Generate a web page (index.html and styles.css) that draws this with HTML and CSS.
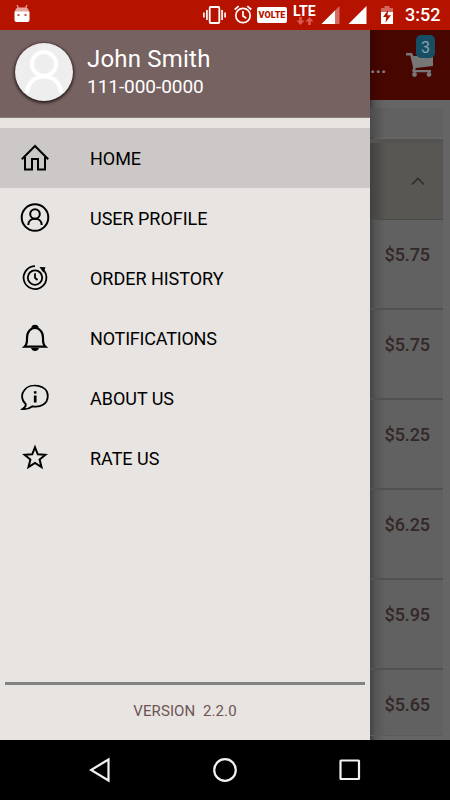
FILE: index.html
```
<!DOCTYPE html>
<html lang="en">
<head>
<meta charset="utf-8">
<title>Menu</title>
<link rel="stylesheet" href="styles.css">
</head>
<body>
<header class="status">
  <svg class="robot" width="16" height="18" viewBox="0 0 16 18"><path d="M3 0l1.400 3M13 0l-1.400 3" stroke="#e9a59d" stroke-width="1.200"/><path d="M1 7.500Q1 2.500 5 2.500h6q4 0 4 5z" fill="#e7a79f"/><path d="M.5 6.500h15V15q0 2-2 2h-11q-2 0-2-2z" fill="#fff"/><path d="M3.500 9h2v2h-2zM10.500 9h2v2h-2z" fill="#b85a50"/></svg>
  <svg class="vibrate" width="23" height="18" viewBox="0 0 23 18" fill="none" stroke="#fff"><rect x="6.700" y="1" width="9.600" height="16" rx="1" stroke-width="1.800"/><path d="M3.900 4v10M19.100 4v10" stroke-width="1.700"/><path d="M.9 6.500v5M22.100 6.500v5" stroke-width="1.600"/></svg>
  <svg class="alarm" width="18" height="19" viewBox="0 0 18 19" fill="none" stroke="#fff" stroke-width="1.700"><circle cx="9" cy="10.500" r="7.200"/><path d="M9 6v5l3.300 2.200M.7 4.500l4-3.400M17.300 4.500l-4-3.400"/></svg>
  <span class="volte">VOLTE</span>
  <span class="lte"><b>LTE</b><svg width="18" height="8" viewBox="0 0 18 8" fill="#dc5a50"><path d="M3.200 0h2.600v3.500H8.500l-4 4.500-4-4.500h2.700zM12.200 8h2.600V4.500h2.700l-4-4.500-4 4.500h2.700z"/></svg></span>
  <svg class="signal1" width="19" height="18" viewBox="0 0 19 18"><path d="M18.500 0v18H.5z" fill="#d56b61"/><path d="M14 4.400V18H.5z" fill="#fff"/></svg>
  <svg class="signal2" width="19" height="18" viewBox="0 0 19 18"><path d="M18.500 0v18H.5z" fill="#fff"/></svg>
  <svg class="battery" width="12" height="18" viewBox="0 0 12 18"><path d="M3.500 0h5v2H12v5H0V2h3.500z" fill="#d5665b"/><path d="M0 6h12v12H0z" fill="#fff"/><path d="M7.200 4L2 11h3.200l-.7 5.500L10 9.200H6.500z" fill="#b51300"/></svg>
  <span class="clock">3:52</span>
</header>
<main class="screen">
  <nav class="drawer">
    <div class="profile">
      <svg class="avatar" width="58" height="58" viewBox="0 0 58 58" fill="none" stroke="#fff" stroke-width="4"><circle cx="29" cy="21" r="12"/><path d="M12 50C13 28 45 28 46 50"/></svg>
      <div class="who"><div class="name">John Smith</div><div class="phone">111-000-0000</div></div>
    </div>
    <ul class="menu">
      <li class="item active"><svg width="30" height="30" viewBox="0 0 30 30" fill="none" stroke="#000" stroke-width="2"><path d="M1.800 16.200L15 3l13.200 13.200M5 14v12.600h7V16h6v10.600h7V14"/></svg>HOME</li>
      <li class="item"><svg width="30" height="30" viewBox="0 0 30 30" fill="none" stroke="#000" stroke-width="2"><circle cx="15" cy="14.500" r="13.300"/><circle cx="15" cy="11" r="4.800"/><path d="M8.300 22C8.300 13.700 21.700 13.700 21.700 22"/></svg>USER PROFILE</li>
      <li class="item"><svg width="30" height="30" viewBox="0 0 30 30" fill="none" stroke="#000" stroke-width="1.800"><path d="M15 3.200A11.400 11.400 0 1 0 23.500 7"/><circle cx="15" cy="14.600" r="7.200"/><path d="M15 10.300v4.500l2.500 2.200"/><path d="M19.500 4l6 .3-2 5.500z" fill="#000" stroke="none"/></svg>ORDER HISTORY</li>
      <li class="item narrow"><svg width="30" height="30" viewBox="0 0 30 30" fill="none" stroke="#000" stroke-width="2.200"><path d="M4.500 23.700c3-2.700 2.500-5 2.500-9 0-13 16-13 16 0 0 4-.5 6.300 2.500 9z"/><path d="M11.300 4.800q.4-3 3.700-3t3.700 3zM11 25q1 3 4 3t4-3z" fill="#000" stroke="none"/></svg>NOTIFICATIONS</li>
      <li class="item"><svg width="30" height="30" viewBox="0 0 30 30" fill="none" stroke="#000" stroke-width="1.800"><path d="M5.500 20.700C1.500 17.500.8 11 4.500 7 10-.5 27.800 1.500 27.800 12.800 27.800 21.500 20 24.700 12.500 23.300 9.500 25.700 6 26.500 2.500 26.100 5 24.500 6.500 23 5.500 20.700z"/><path d="M15.200 12.500v7" stroke-width="2.700"/><path d="M15.200 8.200v2.400" stroke-width="2.600"/></svg>ABOUT US</li>
      <li class="item"><svg width="30" height="30" viewBox="0 0 30 30" fill="none" stroke="#000" stroke-width="2"><path d="M15 4.300l2.800 7 7.600.5-5.800 4.800 1.900 7.400-6.500-4-6.500 4 1.900-7.400-5.800-4.800 7.600-.5z"/></svg>RATE US</li>
    </ul>
    <footer class="version">VERSION&nbsp; 2.2.0</footer>
  </nav>
  <section class="page">
    <div class="appbar"><span class="title">...</span>
      <div class="cart"><svg width="28" height="26" viewBox="0 0 28 26" fill="#777"><path d="M0 1h6l1.400 3H27v10L9.800 16l-.6 2H25v2.300H7q-1.500-1 .2-4.300L4.300 3.500H0z"/><circle cx="8.500" cy="22.500" r="2.400"/><circle cx="23" cy="22.500" r="2.400"/></svg><span class="badge">3</span></div>
    </div>
    <div class="search"></div>
    <div class="section"><svg width="14" height="9" viewBox="0 0 14 9" fill="none" stroke="#302e2d" stroke-width="1.600"><path d="M1 7.500l6-6 6 6"/></svg></div>
    <div class="row">$5.75</div>
    <div class="row">$5.75</div>
    <div class="row">$5.25</div>
    <div class="row">$6.25</div>
    <div class="row">$5.95</div>
    <div class="row last">$5.65</div>
  </section>
</main>
<footer class="navbar">
  <svg width="22" height="26" viewBox="0 0 22 26"><path d="M19.500 2.500v21L2 13z"/></svg>
  <svg width="26" height="26" viewBox="0 0 26 26"><circle cx="13" cy="13" r="10.800"/></svg>
  <svg width="22" height="22" viewBox="0 0 22 22"><rect x="1.500" y="1.500" width="18.500" height="18.500" rx=".5"/></svg>
</footer>
</body>
</html>
```
FILE: styles.css
```
* { box-sizing: border-box; }
body { margin: 0; width: 450px; height: 800px; overflow: hidden; display: flex; flex-direction: column; font-family: Roboto, sans-serif; background: #000; }
svg { display: block; flex: none; }
.status { height: 30px; flex: none; background: #b51300; display: flex; align-items: center; color: #fff; padding-left: 14px; }
.robot { margin-top: -2px; }
.vibrate { margin-left: 173px; }
.alarm { margin-left: 8px; margin-top: -1px; }
.volte { margin-left: 5px; width: 30px; height: 16px; border-radius: 2px; background: #fff; color: #b51300; font-size: 9px; line-height: 16px; font-weight: 900; text-align: center; }
.lte { margin-left: 6px; width: 23px; height: 20px; }
.lte b { display: block; font-size: 14px; line-height: 12px; font-weight: 700; }
.lte svg { margin: 0 0 0 3px; }
.signal1 { margin-left: 5px; }
.signal2 { margin-left: 8px; }
.battery { margin-left: 14px; }
.clock { margin-left: 12px; font-size: 18px; font-weight: 500; line-height: 32px; }
.screen { height: 710px; flex: none; display: grid; grid-template-columns: 370px 80px; }
.drawer { background: #e8e4e1; display: flex; flex-direction: column; }
.profile { height: 88px; background: #766261; display: flex; align-items: flex-start; padding: 13px 0 0 15px; border-bottom: 1px solid #8b7a78; }
.avatar { border-radius: 50%; background: #eee; box-shadow: 0 1px 3px 1px #2b1d1d; }
.who { margin-left: 14px; color: #fff; }
.name { font-size: 24px; line-height: 30px; margin-top: 1px; white-space: nowrap; letter-spacing: .2px; }
.phone { font-size: 19px; line-height: 26px; letter-spacing: -.05px; }
.menu { list-style: none; margin: 10px 0 0; padding: 0; }
.item { height: 60px; display: flex; align-items: center; padding-left: 20px; gap: 40px; font-size: 18px; color: #000; white-space: nowrap; letter-spacing: -.03px; }
.narrow { letter-spacing: -.2px; }
.active { background: #ccc8c7; }
.version { margin: auto 5px 0; height: 58px; border-top: 3px solid #848281; text-align: center; font-size: 15px; line-height: 52px; letter-spacing: .1px; color: #6e5554; }
.page { background: linear-gradient(90deg, #3b3d3e 0, #575757 5px, #626262 12px, #656565 18px); color: #332827; overflow: hidden; }
.appbar { height: 70px; background: linear-gradient(90deg, #3a0500, #480600 12px); display: flex; justify-content: space-between; }
.title { white-space: nowrap; margin-top: 21px; font-size: 20px; line-height: 30px; font-weight: 500; color: #858080; }
.cart { position: relative; margin: 22px 16px 0 0; }
.badge { position: absolute; left: 10px; top: -17px; width: 19px; height: 23px; border-radius: 5px; background: #164f65; color: #8aa2aa; font-size: 16px; line-height: 25px; text-align: center; }
.search { height: 29px; margin: 8px 7px 0 0; background: linear-gradient(90deg, #4b4b4b, #616161 16px); }
.section { height: 81px; margin: 2px 7px 0 0; border-top: 4px solid #545352; border-bottom: 1px solid #4c4b4a; background: linear-gradient(90deg, #40403e, #585753 16px) border-box; display: flex; align-items: center; justify-content: flex-end; padding-right: 18px; }
.row { height: 90px; margin-right: 7px; background: linear-gradient(90deg, #444, #575757 6px, #616161 16px); border-bottom: 2px solid #515151; padding: 21px 13px 0 0; text-align: right; font-size: 18px; line-height: 28px; font-weight: 500; letter-spacing: -.1px; }
.last { height: 66px; border-bottom: 1px solid #5b5b5b; }
.navbar { height: 60px; flex: none; display: flex; justify-content: space-between; align-items: center; padding: 0 89px; fill: none; stroke: #f5f1f1; stroke-width: 2.2; }
```
